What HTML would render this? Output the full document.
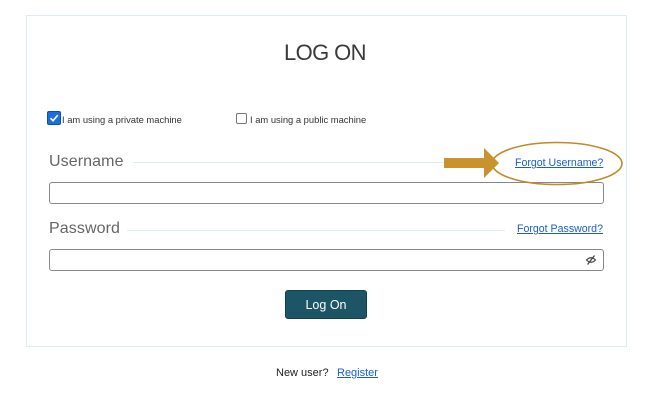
<!DOCTYPE html>
<html><head><meta charset="utf-8"><style>
*{margin:0;padding:0;box-sizing:border-box}
body{width:650px;height:400px;background:#fff;font-family:"Liberation Sans",sans-serif;position:relative;overflow:hidden}
.a{position:absolute}
.card{left:26px;top:15px;width:601px;height:332px;border:1px solid #dcedf1}
.title{left:0;width:650px;top:40px;text-align:center;font-size:22px;color:#3a3a3a;font-weight:300;letter-spacing:-0.6px}
.cb{width:11px;height:11px;border:1px solid #777;border-radius:2px;background:#fff}
.small{font-size:9.4px;color:#333}
.lbl{font-size:16px;color:#666;letter-spacing:0.1px}
.line{height:1px;background:#dbeef3}
.inp{height:22px;border:1px solid #888;border-radius:3px;background:#fff}
.link{font-size:10.6px;color:#1a5fd0;text-decoration:underline}
.btn{left:285px;top:290px;width:82px;height:29px;background:#1c5566;border-radius:3px;color:#fff;font-size:12.5px;text-align:center;line-height:28px;border:1px solid #14404c}
</style></head><body>
<div class="a card"></div>
<div class="a title">LOG ON</div>
<div class="a" style="left:47px;top:111px;width:14px;height:14px;background:#1a6fe0;border-radius:2px;border:1px solid #0d4fb0"></div>
<svg class="a" style="left:48px;top:112px" width="12" height="12"><path d="M2.5 6.2 L5 8.7 L9.8 3.2" stroke="#fff" stroke-width="1.6" fill="none"/></svg>
<div class="a small" style="left:62px;top:114px">I am using a private machine</div>
<div class="a cb" style="left:236px;top:113px"></div>
<div class="a small" style="left:250px;top:114px">I am using a public machine</div>
<div class="a lbl" style="left:49px;top:153px">Username</div>
<div class="a line" style="left:133px;top:162px;width:312px"></div>
<div class="a inp" style="left:49px;top:182px;width:555px"></div>
<div class="a lbl" style="left:49px;top:220px">Password</div>
<div class="a line" style="left:127px;top:230px;width:378px"></div>
<div class="a link" style="left:517px;top:223px">Forgot Password?</div>
<div class="a inp" style="left:49px;top:249px;width:555px"></div>
<svg class="a" style="left:585px;top:254px" width="12" height="12"><path d="M1.5 6 Q6 1.5 10.5 6 Q6 10.5 1.5 6Z" stroke="#444" stroke-width="1.2" fill="none"/><path d="M2.5 10.5 L9.5 1.5" stroke="#444" stroke-width="1.3"/></svg>
<div class="a link" style="left:515px;top:157px">Forgot Username?</div>
<svg class="a" style="left:0;top:0" width="650" height="400">
<ellipse cx="557" cy="163.5" rx="65" ry="21" fill="none" stroke="#c08a2a" stroke-width="1.6"/>
<path d="M444 158 L484 158 L484 148 L499 163 L484 178 L484 168 L444 168Z" fill="#c8922f"/>
</svg>
<div class="a btn">Log On</div>
<div class="a" style="left:276px;top:367px;font-size:11px;color:#222">New user?</div>
<div class="a link" style="left:337px;top:367px;font-size:11px">Register</div>
</body></html>
